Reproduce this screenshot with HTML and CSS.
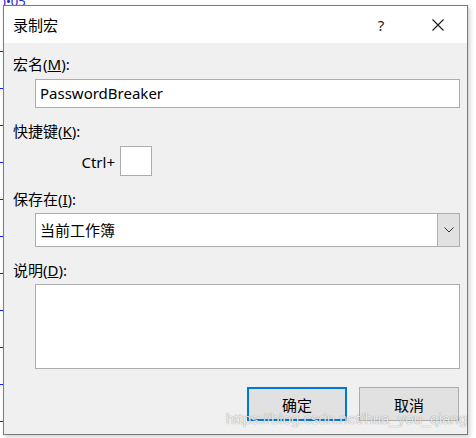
FILE: index.html
```html
<!DOCTYPE html>
<html lang="zh-CN">

<head>
  <meta charset="UTF-8">
  <title>录制宏</title>
  <link rel="stylesheet" href="styles.css">
</head>

<body>
  <div class="sheet-top">)•05</div>

  <div class="dialog">
    <div class="titlebar">
      <span class="title">录制宏</span>
      <span class="title-btn help">?</span>
      <span class="title-btn close">
        <svg width="12" height="12" viewBox="0 0 12 12">
          <path d="M0.5 0.5 L11.5 11.5 M11.5 0.5 L0.5 11.5" stroke="#1a1a1a" stroke-width="1.1" fill="none" />
        </svg>
      </span>
    </div>

    <div class="content">
      <div class="label">宏名(<u>M</u>):</div>
      <div class="textbox">PasswordBreaker</div>

      <div class="label gap">快捷键(<u>K</u>):</div>
      <div class="shortcut">
        <span class="ctrl">Ctrl+</span>
        <div class="keybox"></div>
      </div>

      <div class="label gap">保存在(<u>I</u>):</div>
      <div class="select">
        <span class="select-value">当前工作簿</span>
        <span class="select-arrow">
          <svg width="10" height="6" viewBox="0 0 10 6">
            <path d="M0.5 0.5 L5 5 L9.5 0.5" stroke="#333" stroke-width="1" fill="none" />
          </svg>
        </span>
      </div>

      <div class="label gap">说明(<u>D</u>):</div>
      <div class="textarea"></div>

      <div class="buttons">
        <button class="btn primary">确定</button>
        <button class="btn">取消</button>
      </div>
    </div>

    <div class="watermark">https://blog.csdn.net/hua_you_qiang</div>
  </div>

  <div class="sheet-bottom">07 43 07 47</div>
</body>

</html>
```

FILE: styles.css
```css
body {
  margin: 0;
  font-family: "Noto Sans", "Noto Sans CJK SC", sans-serif;
  color: #000;
  background: #fff repeating-linear-gradient(to bottom, transparent 0 36px, #1a1aff 36px 37px) 0 15px / 4px 100% no-repeat;
  overflow: hidden;
}

.sheet-top {
  height: 5px;
  overflow: hidden;
  padding-left: 2px;
  font-size: 13px;
  line-height: 2px;
  color: #2323c8;
}

.sheet-bottom {
  height: 3px;
  padding-left: 14px;
  font-size: 13px;
  line-height: 18px;
  color: #222;
}

.dialog {
  position: relative;
  width: 465px;
  height: 430px;
  margin-left: 3px;
  box-sizing: border-box;
  border: 1px solid #7a7a7a;
  background: #f0f0f0;
  box-shadow: 2px 2px 4px rgba(0, 0, 0, 0.18);
  display: flex;
  flex-direction: column;
}

.titlebar {
  height: 37px;
  background: #fff;
  display: flex;
  align-items: center;
  padding: 0 6px 0 9px;
  font-size: 15px;
}

.title {
  flex: 1;
}

.title-btn {
  width: 46px;
  display: flex;
  justify-content: center;
  align-items: center;
}

.help {
  margin-right: 11px;
  font-size: 15px;
  color: #1a1a1a;
}

.content {
  flex: 1;
  padding: 11px 7px 0 9px;
  font-size: 15px;
  display: flex;
  flex-direction: column;
}

.label {
  line-height: 20px;
  height: 20px;
}

.label.gap {
  margin-top: 13px;
}

.textbox,
.select,
.textarea {
  margin-left: 22px;
  box-sizing: border-box;
  border: 1px solid #adadad;
  background: #fff;
}

.textbox {
  margin-top: 5px;
  height: 29px;
  line-height: 26px;
  padding-left: 4px;
}

.shortcut {
  margin-top: 5px;
  display: flex;
  align-items: center;
  gap: 5px;
}

.ctrl {
  width: 102px;
  text-align: right;
  padding-top: 2px;
}

.keybox {
  width: 32px;
  height: 30px;
  box-sizing: border-box;
  border: 1px solid #adadad;
  background: #fff;
}

.select {
  margin-top: 4px;
  height: 34px;
  display: flex;
}

.select-value {
  flex: 1;
  line-height: 32px;
  padding-left: 4px;
}

.select-arrow {
  width: 21px;
  background: #e1e1e1;
  border-left: 1px solid #adadad;
  display: flex;
  justify-content: center;
  align-items: center;
}

.textarea {
  margin-top: 4px;
  height: 85px;
}

.buttons {
  margin-top: 18px;
  display: flex;
  justify-content: flex-end;
  gap: 12px;
  padding-right: 1px;
}

.btn {
  width: 100px;
  height: 34px;
  box-sizing: border-box;
  border: 1px solid #adadad;
  background: #e1e1e1;
  font: inherit;
  font-size: 15px;
  color: #000;
  padding: 0;
}

.btn.primary {
  border: 2px solid #0078d7;
}

.watermark {
  position: absolute;
  right: 0;
  top: 405px;
  font-family: "Liberation Sans", sans-serif;
  font-size: 15px;
  line-height: 15px;
  color: rgba(255, 255, 255, 0.85);
  text-shadow: 0 0 1px rgba(0, 0, 0, 0.5);
  white-space: nowrap;
}
```
